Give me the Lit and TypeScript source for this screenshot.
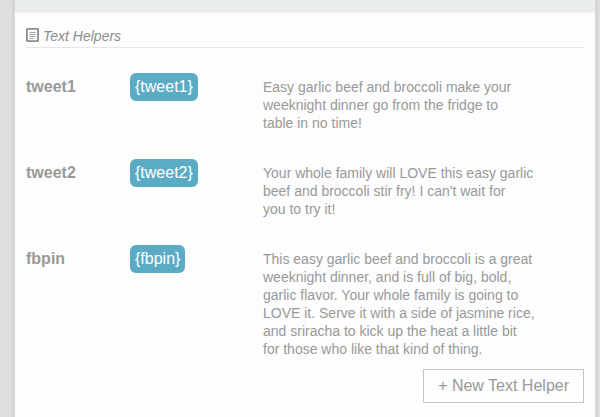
import { LitElement, html, css } from "lit";
import { customElement, state } from "lit/decorators.js";

interface TextHelper {
  name: string;
  lines: string[];
}

@customElement("app-root")
export class AppRoot extends LitElement {
  static styles = css`
    :host {
      display: block;
      box-sizing: border-box;
      min-height: 100vh;
      padding: 0 5px 0 15px;
      background: #dedede;
      color: #999;
      font-family: "Liberation Sans", Arial, Helvetica, sans-serif;
      font-size: 14px;
      line-height: 18px;
    }
    .sheet {
      box-sizing: border-box;
      min-height: 100vh;
      background: #fdfdfd;
      box-shadow: 0 0 0 3px #d5d5d5;
    }
    .band {
      height: 12px;
      background: #eaeded;
      border-bottom: 1px solid #f3f5f5;
    }
    .panel {
      padding: 14px 11px;
    }
    .heading {
      display: flex;
      align-items: center;
      gap: 4px;
      margin: 0 0 30px;
      padding-bottom: 2px;
      border-bottom: 1px solid #e6e6e6;
      font-size: 14px;
      font-weight: normal;
      font-style: italic;
      color: #8c8c8c;
    }
    .icon {
      display: block;
      width: 13px;
      height: 14px;
      margin-bottom: 2px;
    }
    .helpers {
      width: 100%;
      border-collapse: collapse;
      table-layout: fixed;
    }
    .helpers th,
    .helpers td {
      padding: 0 0 32px;
      text-align: left;
      vertical-align: top;
    }
    .helpers tr:last-child > * {
      padding-bottom: 11px;
    }
    .helpers .name {
      width: 104px;
      font-size: 16px;
      font-weight: bold;
    }
    .helpers .token {
      width: 133px;
    }
    .helpers .text {
      white-space: pre-line;
    }
    .tag {
      display: block;
      width: fit-content;
      margin: -5px 0;
      padding: 0 5px;
      border-radius: 6px;
      background: #5cabc4;
      color: #fff;
      font-size: 16px;
      line-height: 28px;
    }
    .actions {
      display: flex;
      justify-content: flex-end;
    }
    .add {
      padding: 7px 14px;
      border: 1px solid #c6c6c6;
      background: transparent;
      color: #999;
      font: inherit;
      font-size: 16px;
      line-height: 18px;
    }
  `;

  @state()
  private helpers: TextHelper[] = [
    {
      name: "tweet1",
      lines: [
        "Easy garlic beef and broccoli make your",
        "weeknight dinner go from the fridge to",
        "table in no time!",
      ],
    },
    {
      name: "tweet2",
      lines: [
        "Your whole family will LOVE this easy garlic",
        "beef and broccoli stir fry! I can't wait for",
        "you to try it!",
      ],
    },
    {
      name: "fbpin",
      lines: [
        "This easy garlic beef and broccoli is a great",
        "weeknight dinner, and is full of big, bold,",
        "garlic flavor. Your whole family is going to",
        "LOVE it. Serve it with a side of jasmine rice,",
        "and sriracha to kick up the heat a little bit",
        "for those who like that kind of thing.",
      ],
    },
  ];

  render() {
    return html`
      <main class="sheet">
        <div class="band"></div>
        <section class="panel">
          <h2 class="heading" id="title">
            <svg class="icon" viewBox="0 0 13 14" fill="none" stroke="currentColor" aria-hidden="true">
              <rect x="0.9" y="0.9" width="11.2" height="12.2" rx="0.5" stroke-width="1.8" />
              <path d="M3.5 4.5h6M3.5 6.5h6M3.5 8.5h6M3.5 10.5h4" stroke-width="1" opacity="0.8" />
            </svg>
            <span>Text Helpers</span>
          </h2>
          <table class="helpers" aria-labelledby="title">
            <tbody>
              ${this.helpers.map(
                (h) => html`
                  <tr>
                    <th class="name" scope="row">${h.name}</th>
                    <td class="token"><span class="tag">{${h.name}}</span></td>
                    <td class="text">${h.lines.join("\n")}</td>
                  </tr>
                `
              )}
            </tbody>
          </table>
          <div class="actions">
            <button class="add" type="button">+ New Text Helper</button>
          </div>
        </section>
      </main>
    `;
  }
}
